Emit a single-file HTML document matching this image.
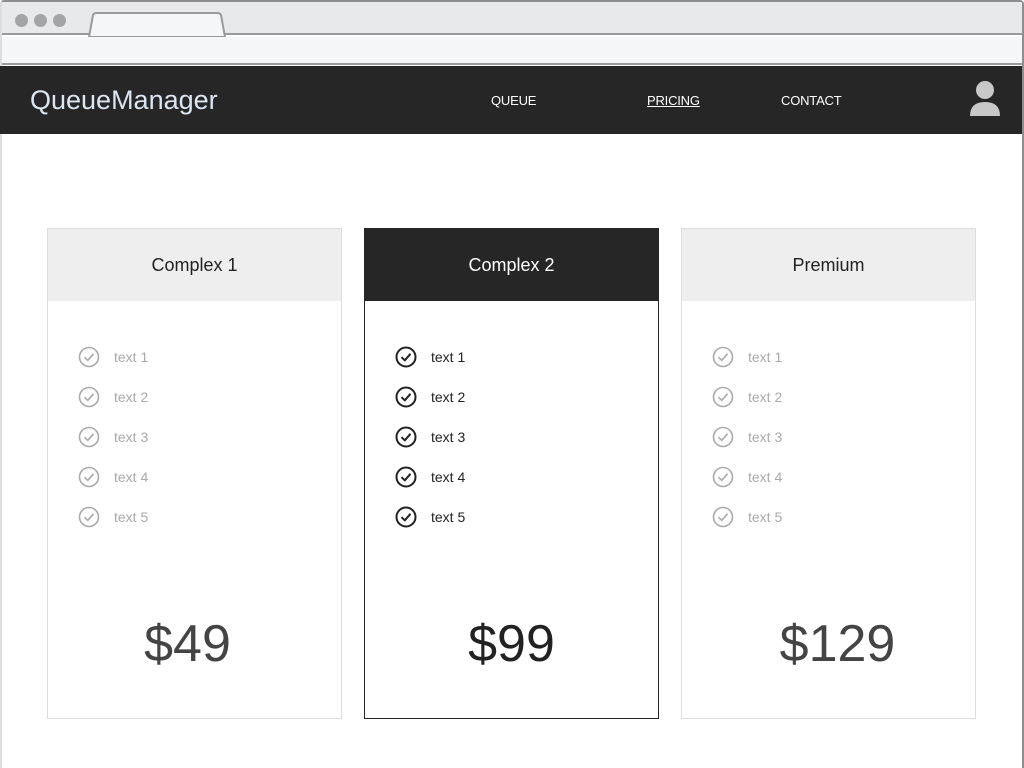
<!DOCTYPE html>
<html><head><style>
*{margin:0;padding:0;box-sizing:border-box}
body{width:1024px;height:768px;background:#fff;font-family:"Liberation Sans",Arial,sans-serif;position:relative;overflow:hidden}
.frame{position:absolute;left:0;top:0;width:1024px;height:768px;border:2px solid #8e8e8e;border-left-color:#ddd;border-bottom:none;border-radius:4px 4px 0 0}
.tabbar{position:absolute;left:2px;top:2px;width:1020px;height:33px;background:#e8e9eb;border-bottom:2px solid #9a9a9a}
.dot{position:absolute;top:12px;width:13px;height:13px;border-radius:50%;background:#a3a4a6}
.addr{position:absolute;left:2px;top:37px;width:1020px;height:28px;background:#f5f6f8;border-bottom:2px solid #9a9a9a}
.nav{position:absolute;left:0;top:66px;width:1022px;height:68px;background:#262626}
.logo{position:absolute;left:30px;top:19px;font-size:27px;color:#dce6f2}
.nav a{position:absolute;top:27px;font-size:13px;color:#fff;text-decoration:none;letter-spacing:-0.2px}
.card{position:absolute;top:228px;width:295px;height:491px;border:1px solid #ddd;background:#fff}
.card .h{height:72px;background:#eee;text-align:center;line-height:72px;font-size:18px;color:#222}
.card.dark{border:1px solid #262626}
.card.dark .h{background:#262626;color:#fff}
.item{position:absolute;left:30px;height:22px;font-size:14px;color:#aaa;display:flex;align-items:center}
.item svg{margin-right:14px}
.dark .item{color:#222}
.price{position:absolute;left:0;width:100%;top:385px;text-align:center;font-size:52px;color:#444}
.dark .price{color:#222}
</style></head><body>
<div class="frame"></div>
<div class="tabbar"><div class="dot" style="left:13px"></div><div class="dot" style="left:32px"></div><div class="dot" style="left:51px"></div>
<svg style="position:absolute;left:84px;top:8px" width="140" height="27"><path d="M3 27 L7 5 Q8 3 11 3 L131 3 Q134 3 135 5 L139 27Z" fill="#f5f6f8" stroke="#9a9a9a" stroke-width="2"/></svg></div>
<div class="addr"></div>
<div class="nav">
<div class="logo">QueueManager</div>
<a style="left:491px">QUEUE</a>
<a style="left:647px;text-decoration:underline">PRICING</a>
<a style="left:781px">CONTACT</a>
<svg style="position:absolute;left:969px;top:15px" width="32" height="36" viewBox="0 0 32 36"><circle cx="16" cy="9" r="9" fill="#c8c8c8"/><path d="M1 35 Q1 21 16 21 Q31 21 31 35Z" fill="#c8c8c8"/></svg>
</div>
<div id="cards"></div>
<script>
const data=[[47,"Complex 1","$49","",-7],[364,"Complex 2","$99","dark",0],[681,"Premium","$129","",9]];
let h="";
for(const [x,t,p,c,o] of data){
 const col=c?"#222":"#aaa";
 h+=`<div class="card ${c}" style="left:${x}px"><div class="h">${t}</div>`;
 for(let i=0;i<5;i++){
  h+=`<div class="item" style="top:${117+i*40}px"><svg width="22" height="22" viewBox="0 0 22 22"><circle cx="11" cy="11" r="9.5" fill="none" stroke="${col}" stroke-width="${c?2:1.6}"/><path d="M6.5 11.2 L9.8 14.3 L15.5 7.8" fill="none" stroke="${col}" stroke-width="${c?2:1.6}"/></svg>text ${i+1}</div>`;
 }
 h+=`<div class="price" style="left:${o}px">${p}</div></div>`;
}
document.getElementById("cards").innerHTML=h;
</script>
</body></html>
